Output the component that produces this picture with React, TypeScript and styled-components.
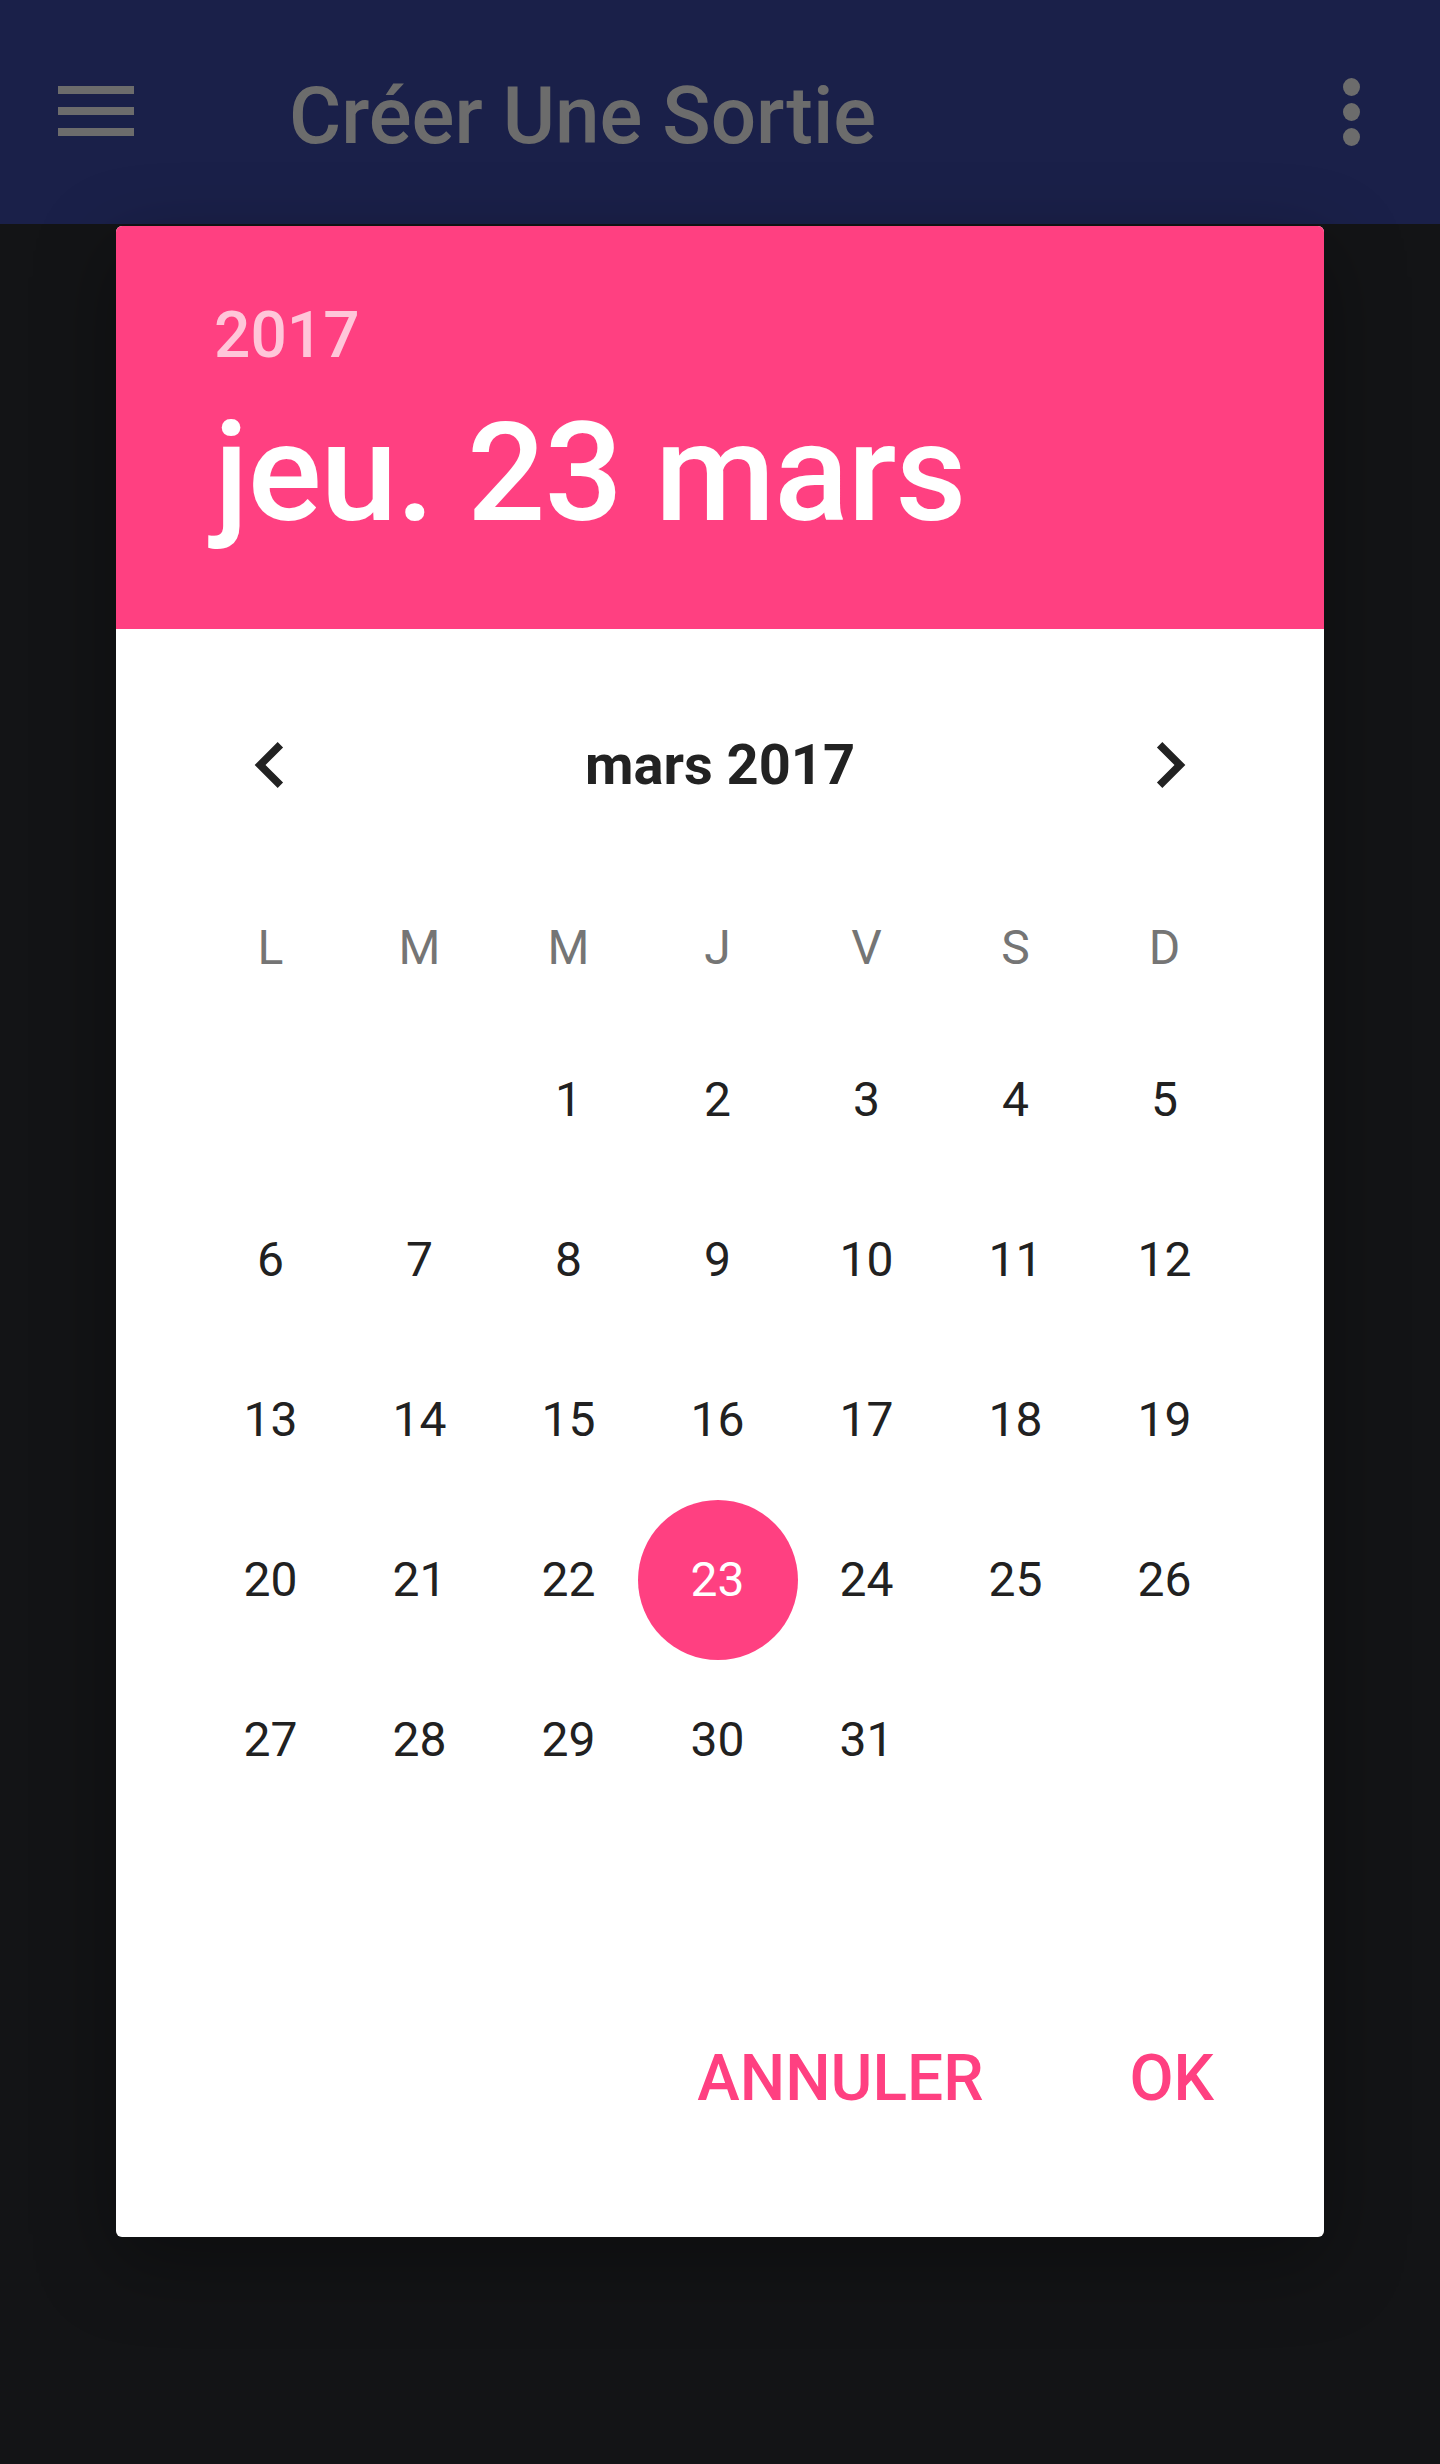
import React from "react";
import styled, { createGlobalStyle } from "styled-components";

const Global = createGlobalStyle`
  html, body { margin: 0; padding: 0; background: #131416; }
  * { box-sizing: border-box; }
  body { font-family: Roboto, "Noto Sans", "Liberation Sans", sans-serif; }
`;

const PINK = "#ff4081";

const Page = styled.div`
  width: 1440px;
  height: 2464px;
  display: flex;
  flex-direction: column;
  background: #131416;
  overflow: hidden;
`;

const Toolbar = styled.header`
  height: 224px;
  flex-shrink: 0;
  background: #1a2049;
  display: flex;
  align-items: center;
  padding: 0 80px 0 58px;
`;

const MenuIcon = styled.div`
  width: 76px;
  display: flex;
  flex-direction: column;
  gap: 13px;
  margin-top: -2px;
  & > span {
    display: block;
    height: 8px;
    background: #6c6c6c;
  }
`;

const Title = styled.h1`
  margin: 8px 0 0 155px;
  font-family: Roboto, "Noto Sans", sans-serif;
  font-weight: 500;
  font-size: 80px;
  line-height: 80px;
  color: #6c6c6c;
  flex: 1;
`;

const Kebab = styled.div`
  display: flex;
  flex-direction: column;
  gap: 7px;
  & > span {
    width: 17px;
    height: 18px;
    border-radius: 50%;
    background: #6c6c6c;
  }
`;

const Scrim = styled.main`
  flex: 1;
  display: flex;
  justify-content: center;
  align-items: flex-start;
  padding-top: 2px;
`;

const Dialog = styled.section`
  width: 1208px;
  background: #ffffff;
  border-radius: 6px;
  overflow: hidden;
  box-shadow: 0 24px 80px rgba(0, 0, 0, 0.35);
`;

const Header = styled.div`
  background: ${PINK};
  height: 403px;
  padding: 78px 0 0 98px;
  display: flex;
  flex-direction: column;
  gap: 36px;
`;

const YearLabel = styled.div`
  font-weight: 500;
  font-size: 64px;
  line-height: 64px;
  color: rgba(255, 255, 255, 0.7);
`;

const DateLabel = styled.div`
  font-weight: 500;
  font-size: 138px;
  line-height: 138px;
  color: #ffffff;
  letter-spacing: -1px;
`;

const Body = styled.div`
  padding: 56px 0 108px;
  display: flex;
  flex-direction: column;
`;

const MonthRow = styled.div`
  height: 160px;
  display: flex;
  align-items: center;
  justify-content: space-between;
  padding: 0 108px;
`;

const NavButton = styled.button`
  width: 92px;
  height: 92px;
  padding: 0;
  border: none;
  background: transparent;
  display: flex;
  align-items: center;
  justify-content: center;
  svg { display: block; }
`;

const MonthLabel = styled.div`
  font-weight: 700;
  font-size: 56px;
  line-height: 56px;
  color: #222222;
`;

const Grid = styled.div<{ $rowHeight: number; $top: number }>`
  margin: ${(p) => p.$top}px 0 0 80px;
  display: grid;
  grid-template-columns: repeat(7, 149px);
  grid-auto-rows: ${(p) => p.$rowHeight}px;
`;

const Weekday = styled.div`
  display: flex;
  align-items: center;
  justify-content: center;
  font-size: 48px;
  line-height: 48px;
  color: #757575;
`;

const DayCell = styled.div`
  display: flex;
  align-items: center;
  justify-content: center;
`;

const Day = styled.div<{ $selected?: boolean }>`
  flex-shrink: 0;
  width: 160px;
  height: 160px;
  border-radius: 50%;
  display: flex;
  align-items: center;
  justify-content: center;
  font-size: 48px;
  line-height: 48px;
  color: ${(p) => (p.$selected ? "#ffffff" : "#212121")};
  background: ${(p) => (p.$selected ? PINK : "transparent")};
`;

const Actions = styled.div`
  margin-top: 209px;
  height: 100px;
  display: flex;
  justify-content: flex-end;
  align-items: center;
  gap: 146px;
  padding-right: 110px;
`;

const ActionButton = styled.button`
  border: none;
  background: transparent;
  padding: 0;
  font-family: Roboto, "Noto Sans", sans-serif;
  font-weight: 500;
  font-size: 64px;
  line-height: 64px;
  color: ${PINK};
  text-transform: uppercase;
`;

const Chevron = ({ dir }: { dir: "left" | "right" }) => (
  <svg width="92" height="92" viewBox="0 0 24 24">
    <path
      fill="#222222"
      d={
        dir === "left"
          ? "M15.41 7.41L14 6l-6 6 6 6 1.41-1.41L10.83 12z"
          : "M8.59 16.59L10 18l6-6-6-6-1.41 1.41L13.17 12z"
      }
    />
  </svg>
);

const weekdays = ["L", "M", "M", "J", "V", "S", "D"];
const leading = 2;
const days = Array.from({ length: 31 }, (_, i) => i + 1);

export default function App() {
  return (
    <Page>
      <Global />
      <Toolbar>
        <MenuIcon>
          <span />
          <span />
          <span />
        </MenuIcon>
        <Title>Créer Une Sortie</Title>
        <Kebab>
          <span />
          <span />
          <span />
        </Kebab>
      </Toolbar>
      <Scrim>
        <Dialog>
          <Header>
            <YearLabel>2017</YearLabel>
            <DateLabel>jeu. 23 mars</DateLabel>
          </Header>
          <Body>
            <MonthRow>
              <NavButton aria-label="Mois précédent">
                <Chevron dir="left" />
              </NavButton>
              <MonthLabel>mars 2017</MonthLabel>
              <NavButton aria-label="Mois suivant">
                <Chevron dir="right" />
              </NavButton>
            </MonthRow>
            <Grid $rowHeight={100} $top={53}>
              {weekdays.map((w, i) => (
                <Weekday key={i}>{w}</Weekday>
              ))}
            </Grid>
            <Grid $rowHeight={160} $top={22}>
              {Array.from({ length: leading }, (_, i) => (
                <DayCell key={`e${i}`} />
              ))}
              {days.map((d) => (
                <DayCell key={d}>
                  <Day $selected={d === 23}>{d}</Day>
                </DayCell>
              ))}
            </Grid>
            <Actions>
              <ActionButton>Annuler</ActionButton>
              <ActionButton>OK</ActionButton>
            </Actions>
          </Body>
        </Dialog>
      </Scrim>
    </Page>
  );
}
